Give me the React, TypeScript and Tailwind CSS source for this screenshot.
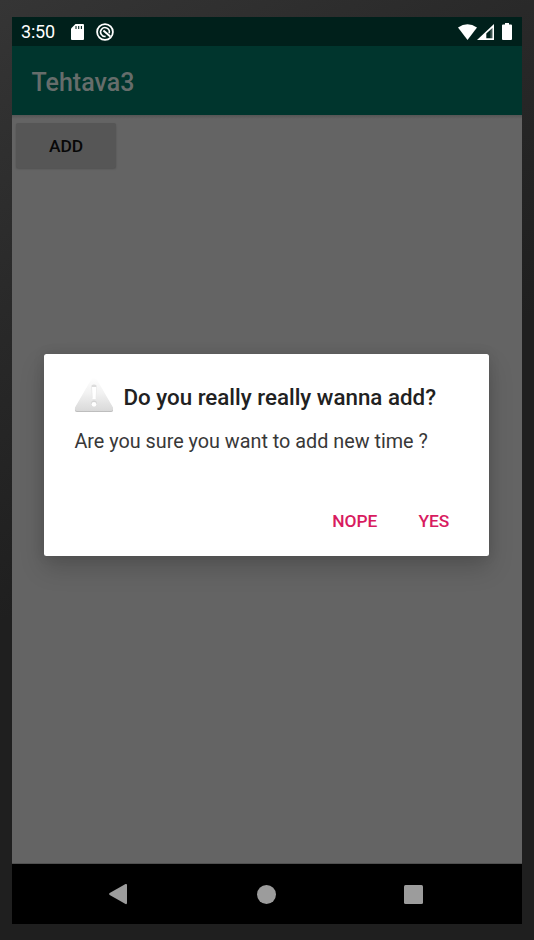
function StatusBar() {
  return (
    <div className="flex h-[29px] shrink-0 items-center bg-[#00201b] pl-[9px] pr-[9px] text-white">
      <span className="w-[34px] whitespace-nowrap text-[18px] leading-[29px] tracking-[-0.2px]">3:50</span>
      <svg className="ml-[16px] h-[16px] w-[13px]" viewBox="0 0 13 16">
        <path fill="white" d="M4.5 0H12Q13 0 13 1V15Q13 16 12 16H1Q0 16 0 15V4.5Z" />
        <path stroke="#00201b" strokeWidth="1.1" d="M5 2v3M7.7 2v3M10.4 2v3" />
      </svg>
      <svg className="ml-[12px] h-[18px] w-[18px]" viewBox="0 0 18 18" fill="none" stroke="white">
        <circle cx="9" cy="9" r="7.9" strokeWidth="1.8" />
        <path strokeWidth="1.6" d="M13.2 10.2A4.4 4.4 0 0 0 5.6 6.2A4.4 4.4 0 0 0 9.6 13.4" />
        <path strokeWidth="2" d="M7.4 7.6L14.3 13.6" />
      </svg>
      <svg className="ml-auto h-[16px] w-[19px]" viewBox="0 0 19 16" fill="white">
        <path d="M0 3.5Q9.5-3.2 19 3.5L9.5 16Z" />
      </svg>
      <svg className="h-[16px] w-[17px]" viewBox="0 0 17 16">
        <path fill="white" fillRule="evenodd" d="M17 0V16H0ZM15.4 4L9.3 9.5V14.3H15.4Z" />
        <path fill="white" opacity="0.25" d="M13.4 5.8L15.4 4V14.3H13.4Z" />
      </svg>
      <svg className="ml-[8px] mr-[1px] h-[17px] w-[10px]" viewBox="0 0 10 17" fill="white">
        <path d="M3 0H7V1.5H9Q10 1.5 10 2.5V16Q10 17 9 17H1Q0 17 0 16V2.5Q0 1.5 1 1.5H3Z" />
      </svg>
    </div>
  );
}

function WarningIcon() {
  return (
    <svg className="h-[36px] w-[40px] shrink-0" viewBox="0 0 40 36">
      <defs>
        <linearGradient id="warning-fill" x1="0" y1="0" x2="0" y2="1">
          <stop offset="0" stopColor="#ffffff" />
          <stop offset="0.45" stopColor="#f2f2f2" />
          <stop offset="1" stopColor="#d9d9d9" />
        </linearGradient>
        <linearGradient id="warning-edge" x1="0" y1="0" x2="0" y2="1">
          <stop offset="0" stopColor="#fcfcfc" />
          <stop offset="0.6" stopColor="#e6e6e6" />
          <stop offset="1" stopColor="#bcbcbc" />
        </linearGradient>
      </defs>
      <path fill="url(#warning-edge)" d="M17.5 3Q20 0 22.5 3L38.7 31Q40 35 37 35H3Q0 35 1.3 31Z" />
      <path fill="url(#warning-fill)" d="M17.5 2Q20-1 22.5 2L38.7 30Q40 34 37 34H3Q0 34 1.3 30Z" />
      <path fill="#dcdcdc" d="M17.5 8.5Q20 6.5 22.5 8.5L22 21H18Z" />
      <path fill="#fff" d="M18 10H22.2L21.7 22H18.5Z" />
      <circle cx="20" cy="26.4" r="2.8" fill="#d4d4d4" />
      <circle cx="20" cy="27.3" r="2.4" fill="#fff" />
    </svg>
  );
}

function ConfirmDialog() {
  return (
    <section className="absolute left-[32.4px] top-[337px] flex h-[201.6px] w-[444.4px] flex-col rounded-[2.5px] bg-white pl-[30px] shadow-[0_12px_24px_rgba(0,0,0,0.18),0_0_12px_rgba(0,0,0,0.1)]">
      <div className="mt-[23px] flex h-[36px] items-center">
        <WarningIcon />
        <h2 className="ml-[9px] mt-[4px] whitespace-nowrap text-[22.35px] font-medium leading-[30px] text-[#212121]">Do you really really wanna add?</h2>
      </div>
      <p className="mt-[15px] whitespace-nowrap text-[19.8px] leading-[28px] text-[#383838]">Are you sure you want to add new time ?</p>
      <div className="mt-[54px] flex h-[22px] justify-end gap-[41px] pr-[39.4px] text-[17.4px] font-medium leading-[22px] text-[#d81b60]">
        <button>NOPE</button>
        <button>YES</button>
      </div>
    </section>
  );
}

function NavBar() {
  return (
    <nav className="flex h-[60px] shrink-0 items-center bg-black pl-[97px]">
      <svg className="h-[22px] w-[18px]" viewBox="0 0 18 22" fill="#9c9c9c">
        <path d="M.7 10Q-.5 11 .7 12L16.5 21Q18 21.5 18 20V2Q18 .5 16.5 1Z" />
      </svg>
      <div className="ml-[130px] h-[19px] w-[19px] rounded-full bg-[#9c9c9c]" />
      <div className="ml-[128px] h-[19px] w-[19px] rounded-[1.5px] bg-[#9c9c9c]" />
    </nav>
  );
}

export default function App() {
  return (
    <div className="h-[940px] w-[534px] bg-[linear-gradient(150deg,#353535_0%,#292929_25%,#1f1f1f_50%,#1f1f1f_100%)] pl-[12px] pt-[17px] font-[Roboto,sans-serif]">
      <main className="relative flex h-[907px] w-[510px] flex-col overflow-hidden bg-[#646464]">
        <StatusBar />
        <header className="flex h-[69px] shrink-0 items-center bg-[#00352d] pl-[19.5px] text-[25px] font-medium text-[#666d6b]">
          <h1 className="mt-[4px]">Tehtava3</h1>
        </header>
        <div className="flex-1 border-b border-[#505050] bg-[linear-gradient(#555_0px,#646464_4px)] pl-[4px] pt-[8px]">
          <button className="h-[45px] w-[100px] rounded-[2px] bg-[#565656] pt-[2px] text-[17.4px] font-medium text-[#080808] shadow-[0_1px_2px_rgba(0,0,0,0.2)]">ADD</button>
        </div>
        <NavBar />
        <ConfirmDialog />
      </main>
    </div>
  );
}
